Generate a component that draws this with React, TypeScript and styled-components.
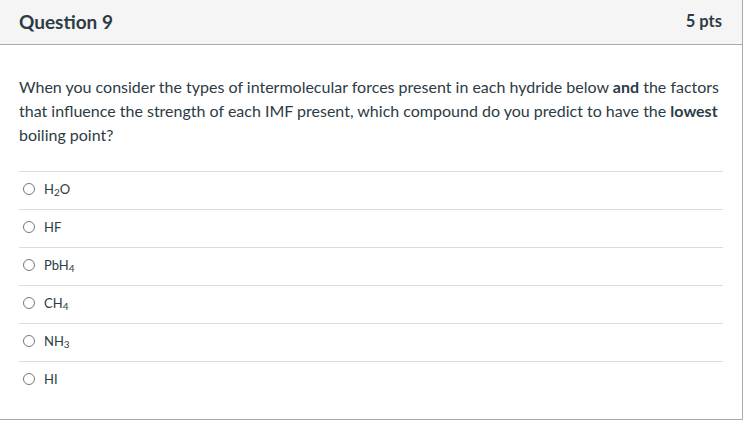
import React from "react";
import styled, { createGlobalStyle } from "styled-components";

const GlobalStyle = createGlobalStyle`
  body {
    margin: 0;
    background: #fff;
    font-family: Lato, "Open Sans", sans-serif;
    color: #2d3b45;
  }
`;

const Card = styled.div`
  box-sizing: border-box;
  width: 744px;
  margin: -1px 0 0 -1px;
  border: 1px solid #aaaaaa;
  background: #fff;
`;

const Header = styled.div`
  display: flex;
  align-items: center;
  justify-content: space-between;
  height: 45px;
  box-sizing: border-box;
  padding: 0 20px 2px 19px;
  background: #f5f5f5;
  border-bottom: 1px solid #aaaaaa;
`;

const Title = styled.h2`
  margin: 0;
  font-size: 19px;
  font-weight: 700;
  color: #2d3b45;
`;

const Points = styled.span`
  font-size: 16.5px;
  font-weight: 700;
  color: #2d3b45;
`;

const Body = styled.div`
  padding: 30px 19px 20px 19px;
`;

const Text = styled.p`
  margin: 0 0 24px 0;
  font-size: 16px;
  line-height: 24px;
`;

const Answers = styled.div`
  display: flex;
  flex-direction: column;
`;

const Answer = styled.label`
  display: flex;
  align-items: center;
  gap: 9px;
  height: 38px;
  box-sizing: border-box;
  padding: 0 0 3px 4px;
  border-top: 1px solid #dcdcdc;
  font-size: 13px;
`;

const Radio = styled.span`
  box-sizing: border-box;
  width: 12px;
  height: 12px;
  border: 1px solid #767676;
  border-radius: 50%;
  flex-shrink: 0;
`;

const Sub = styled.sub`
  font-size: 10px;
  vertical-align: -2px;
  line-height: 0;
`;

const answers: React.ReactNode[] = [
  <>H<Sub>2</Sub>O</>,
  <>HF</>,
  <>PbH<Sub>4</Sub></>,
  <>CH<Sub>4</Sub></>,
  <>NH<Sub>3</Sub></>,
  <>HI</>,
];

export default function App() {
  return (
    <>
      <GlobalStyle />
      <Card>
        <Header>
          <Title>Question 9</Title>
          <Points>5 pts</Points>
        </Header>
        <Body>
          <Text>
            When you consider the types of intermolecular forces present in each hydride below{" "}
            <b>and</b> the factors that influence the strength of each IMF present, which compound
            do you predict to have the <b>lowest</b> boiling point?
          </Text>
          <Answers>
            {answers.map((a, i) => (
              <Answer key={i}>
                <Radio />
                <span>{a}</span>
              </Answer>
            ))}
          </Answers>
        </Body>
      </Card>
    </>
  );
}
